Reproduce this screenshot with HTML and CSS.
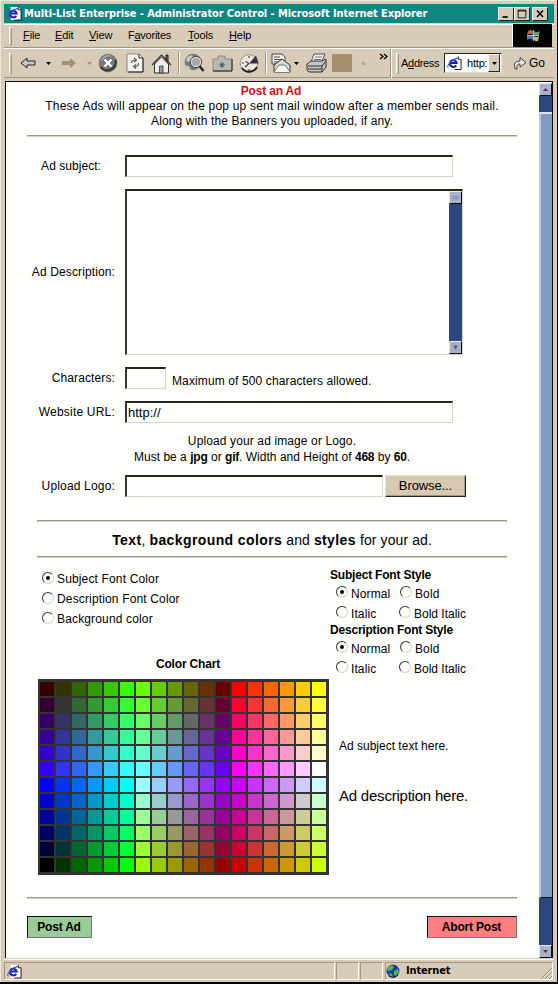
FILE: index.html
```html
<!DOCTYPE html>
<html lang="en">
<head>
<meta charset="utf-8">
<title>Multi-List Enterprise - Administrator Control</title>
<link rel="stylesheet" href="styles.css">
</head>
<body>
<svg width="0" height="0" class="defs">
  <symbol id="ie" viewBox="0 0 16 16">
    <path d="M4 1h8l3 3v11H4z" fill="#fff"/>
    <path d="M12 1v3h3v11H8" fill="none" stroke="#111" stroke-width="1"/>
    <path d="M9.800 10.500A3.600 3.600 0 1 1 10.300 8H4" fill="none" stroke="#1b22a8" stroke-width="2.200"/>
    <path d="M1 13Q0 10 5 6T12 3" fill="none" stroke="#3a52d8" stroke-width="1.200"/>
  </symbol>
</svg>
<div class="window">
  <header class="titlebar">
    <svg class="title-icon"><use href="#ie"/></svg>
    <span class="title">Multi-List Enterprise - Administrator Control - Microsoft Internet Explorer</span>
    <span class="wbtn"><svg viewBox="0 0 16 14"><path d="M4 10.500h6" stroke="#000" stroke-width="2"/></svg></span>
    <span class="wbtn"><svg viewBox="0 0 16 14"><path d="M3.500 2.500h9v9h-9zM3 3.500h10" fill="none" stroke="#000"/></svg></span>
    <span class="wbtn close"><svg viewBox="0 0 16 14"><path d="M4.500 3l7 7.500M11.500 3l-7 7.500" stroke="#000" stroke-width="1.700"/></svg></span>
  </header>
  <nav class="menubar">
    <i class="grip"></i>
    <span class="m-file"><u>F</u>ile</span><span class="m-edit"><u>E</u>dit</span><span class="m-view"><u>V</u>iew</span><span class="m-fav">F<u>a</u>vorites</span><span class="m-tools"><u>T</u>ools</span><span class="m-help"><u>H</u>elp</span>
    <div class="throbber"><svg viewBox="0 0 16 14" width="16" height="14">
      <path d="M3 2q3-2 5 0v4q-2-2-6 0z" fill="#b8604c"/><path d="M9 2q3 2 6 0l-1 4q-3 2-5 0z" fill="#5c9c64"/>
      <path d="M2 7q4-2 6 0v4q-3-2-6 0z" fill="#5078c0"/><path d="M9 7q2 2 5 0l-1 5q-2 1-4-1z" fill="#d0b85c"/>
      <path d="M8.500 1v11M2 6.500h12" stroke="#cdd" stroke-width=".8"/></svg></div>
  </nav>
  <div class="toolbar">
    <i class="grip"></i>
    <svg class="t-back" width="16" height="12" viewBox="0 0 16 12"><path d="M1 6l6-5v3h8v4H7v3z" fill="#c8c4c0" stroke="#222"/></svg>
    <svg class="t-dd1" width="5" height="3"><path d="M0 0h5L2.500 3z"/></svg>
    <svg class="t-fwd" width="16" height="12" viewBox="0 0 16 12"><path d="M15 6L9 1v3H1v4h8v3z" fill="#a3906f"/></svg>
    <svg class="t-dd2" width="5" height="3"><path d="M0 0h5L2.500 3z" fill="#a3906f"/></svg>
    <svg class="t-stop" width="20" height="20" viewBox="0 0 20 20"><circle cx="10" cy="10" r="9.300" fill="#777"/><path d="M2.500 14a8.500 8.500 0 0 0 15-7" fill="none" stroke="#333" stroke-width="2"/><path d="M3 8q3-6 10-5" stroke="#aaa" fill="none" stroke-width="1.500"/><path d="M6.500 6.500l7 7M13.500 6.500l-7 7" stroke="#fff" stroke-width="2.200"/></svg>
    <svg class="t-ref" width="18" height="20" viewBox="0 0 18 20"><path d="M1 1h12l4 4v14H1z" fill="#f5f3ef" stroke="#8d877b"/><path d="M13 1v4h4v14H2" fill="none" stroke="#222"/><path d="M5.500 10q0-3 3.500-3M8 5l2.500 2L8 9M12.500 10q0 3.500-3.500 3.500M10 11.500L7.500 13.500l2.500 2" fill="none" stroke="#555" stroke-width="1.200"/></svg>
    <svg class="t-home" width="21" height="21" viewBox="0 0 21 21"><path d="M15 2h2v8h-2z" fill="#777" stroke="#222"/><path d="M3.500 11v9h14v-9l-7-7z" fill="#eeece8" stroke="#333"/><path d="M1 12l9.500-10L20 12" fill="none" stroke="#333" stroke-width="1.200"/><path d="M8.500 13h3.500v7H8.500z" fill="#999" stroke="#333" stroke-width=".8"/></svg>
    <i class="sep s1"></i>
    <svg class="t-search" width="21" height="20" viewBox="0 0 21 20"><circle cx="9" cy="9" r="8.300" fill="#777"/><path d="M3 4l5-2 1 3-4 4-3-1zM2 12l3 1 2 4-4-2z" fill="#c9c6c0"/><circle cx="12" cy="9" r="4.800" fill="#aaa8a4" stroke="#ddd" stroke-width="1.500"/><circle cx="12" cy="9" r="5.700" fill="none" stroke="#333" stroke-width=".8"/><path d="M15.500 13l4 5" stroke="#222" stroke-width="2.400"/></svg>
    <svg class="t-favs" width="21" height="18" viewBox="0 0 21 18"><path d="M1 5h5V2h7v3h7v12H1z" fill="#bbb8b2" stroke="#888"/><path d="M1 17h19V5" fill="none" stroke="#222"/><path d="M10 8v6M7 11h6M8 9l4 4M12 9l-4 4" stroke="#444" stroke-width=".8"/></svg>
    <svg class="t-hist" width="21" height="20" viewBox="0 0 21 20"><circle cx="10" cy="10.500" r="8.800" fill="#e9e7e2" stroke="#999" stroke-width="1"/><path d="M10 10.500L17 2.500l2.500 8z" fill="#333"/><path d="M3 15a8.800 8.800 0 0 0 15-1" fill="none" stroke="#222" stroke-width="2"/><path d="M10 10.500L6.500 8.500M10 10.500L6 14M10 3v2M3 10h2M10 16v2" stroke="#444" stroke-width="1.200"/></svg>
    <i class="sep s2"></i>
    <svg class="t-mail" width="21" height="20" viewBox="0 0 21 20"><path d="M1 1h10l3 3v7H1z" fill="#eee" stroke="#444"/><path d="M3 4h6M3 6.500h8M3 9h5" stroke="#555"/><path d="M3 12l8-6 8 6v7H3z" fill="#ddd9d4" stroke="#333"/><path d="M3 19l5-7h6l5 7" fill="#f5f5f3" stroke="#777"/></svg>
    <svg class="t-dd3" width="5" height="3"><path d="M0 0h5L2.500 3z"/></svg>
    <svg class="t-print" width="21" height="20" viewBox="0 0 21 20"><path d="M5 9l3-8h11l-4 9z" fill="#f4f2ef" stroke="#555"/><path d="M9 4h7M8 6.500h7" stroke="#777"/><path d="M1 11l4-3h11l4-2v8l-4 5H3l-2-2z" fill="#c8c5bf" stroke="#333"/><path d="M2 13h14l4-5M2 16h14M16 13v6" stroke="#333" fill="none"/></svg>
    <i class="t-edit"></i><i class="t-dot"></i>
    <svg class="t-more" width="9" height="8" viewBox="0 0 9 8"><path d="M1 1l3 2.500L1 6M5 1l3 2.500L5 6" fill="none" stroke="#000" stroke-width="1.300"/></svg>
    <i class="sep s3"></i><i class="grip g2"></i>
    <span class="address">A<u>d</u>dress</span>
    <div class="combo"><svg width="15" height="16"><use href="#ie"/></svg><span>http:</span><b><svg width="5" height="3"><path d="M0 0h5L2.500 3z"/></svg></b></div>
    <svg class="t-go" width="14" height="14" viewBox="0 0 14 14"><path d="M2 13Q-1 5 7 5V1.500l6 5-6 4.500V8Q3 8 4 13z" fill="#e8e4dc" stroke="#333" stroke-width=".9"/></svg>
    <span class="go">Go</span>
  </div>
  <div class="viewport">
    <main class="page">
      <section class="intro">
        <h1>Post an Ad</h1>
        <p class="line1">These Ads will appear on the pop up sent mail window after a member sends mail.</p>
        <p>Along with the Banners you uploaded, if any.</p>
      </section>
      <hr class="wide">
      <form class="form">
        <div class="row r-subject"><label class="short">Ad subject:</label><span class="field f-long"></span></div>
        <div class="row r-desc"><label>Ad Description:</label><div class="field area"><div class="ascroll"><i>=</i><i>▾</i></div></div></div>
        <div class="row r-char"><label>Characters:</label><span class="field f-tiny"></span><span class="hint">Maximum of 500 characters allowed.</span></div>
        <div class="row r-url"><label class="url">Website URL:</label><span class="field f-long">http://</span></div>
        <div class="upload"><p>Upload your ad image or Logo.</p><p class="must">Must be a <b>jpg</b> or <b>gif</b>. Width and Height of <b>468</b> by <b>60</b>.</p></div>
        <div class="row r-logo"><label>Upload Logo:</label><span class="field f-file"></span><span class="browse">Browse...</span></div>
      </form>
      <hr class="inner h1r">
      <h2><b>Text</b>, <b class="bg">background colors</b> and <b>styles</b> for your ad.</h2>
      <hr class="inner h2r">
      <section class="styles">
        <div class="left">
          <div class="opt"><i class="radio on"></i>Subject Font Color</div>
          <div class="opt"><i class="radio"></i>Description Font Color</div>
          <div class="opt"><i class="radio"></i>Background color</div>
          <h3>Color Chart</h3>
          <div class="chart" id="chart"></div>
        </div>
        <div class="right">
          <h3>Subject Font Style</h3>
          <div class="pair"><span><i class="radio on"></i>Normal</span><span><i class="radio"></i>Bold</span></div>
          <div class="pair second"><span><i class="radio"></i>Italic</span><span class="bi"><i class="radio"></i>Bold Italic</span></div>
          <h3>Description Font Style</h3>
          <div class="pair"><span><i class="radio on"></i>Normal</span><span><i class="radio"></i>Bold</span></div>
          <div class="pair second"><span><i class="radio"></i>Italic</span><span class="bi"><i class="radio"></i>Bold Italic</span></div>
          <p class="sample1">Ad subject text here.</p>
          <p class="sample2">Ad description here.</p>
        </div>
      </section>
      <hr class="wide last">
      <div class="actions"><span class="btn post">Post Ad</span><span class="btn abort">Abort Post</span></div>
    </main>
    <aside class="scroll">
      <i class="sb"><svg width="5" height="3"><path d="M2.500 0L5 3H0z" fill="#633"/></svg></i>
      <i class="thumb"></i>
      <i class="sb"><svg width="5" height="3"><path d="M0 0h5L2.500 3z" fill="#633"/></svg></i>
    </aside>
  </div>
  <footer class="status">
    <div class="pane p1"><svg width="15" height="15"><use href="#ie"/></svg></div><div class="pane p2"></div><div class="pane p2"></div>
    <div class="pane p3"><svg width="14" height="14" viewBox="0 0 14 14"><circle cx="7" cy="7" r="6.500" fill="#1c3ca0"/><path d="M2 3l4-2 2 2-2 3-3 1-2-1zM8 7l4-2 1 3-3 4-2-1zM3 9l3 1 1 3-3-1z" fill="#4fb648"/><path d="M3 12q5 3 9-1" stroke="#112" fill="none"/></svg>Internet
    <svg class="resize" width="12" height="12"><path d="M1 12L12 1M5 12l7-7M9 12l3-3" stroke="#8d8474"/><path d="M2 12L12 2M6 12l6-6M10 12l2-2" stroke="#fff" stroke-width=".6"/></svg></div>
  </footer>
</div>
<script src="chart.js"></script>
</body>
</html>
```
FILE: styles.css
```css
* { box-sizing: border-box; }
body { margin: 0; background: #d8ccb9; font: 12px/15px "Liberation Sans", Arial, sans-serif; color: #000; letter-spacing: .12px; }
p, h1, h2, h3 { margin: 0; font-size: 12px; font-weight: normal; }
i { display: block; font-style: normal; flex: none; }
svg { display: block; flex: none; }
.defs { position: absolute; }
.window { width: 558px; height: 984px; display: flex; flex-direction: column; background: #d8ccb9; border-right: 1px solid #000; border-bottom: 2px solid #000; box-shadow: inset 1px 1px #efe8dc; padding: 4px 3px 0 4px; }
.titlebar { height: 19px; background: #0d8780; display: flex; align-items: center; color: #fff; font: bold 11px/18px "DejaVu Sans Condensed", sans-serif; letter-spacing: -.09px; padding: 0 2px 0 3px; flex: none; }
.title-icon { width: 15px; height: 15px; }
.title { width: 476px; padding-left: 2px; white-space: nowrap; }
.wbtn { width: 16px; height: 14px; background: #d8ccb9; border: 1px solid; border-color: #fff #222 #222 #fff; flex: none; }
.wbtn.close { margin-left: 2px; }
.wbtn svg { width: 14px; height: 12px; }
.menubar { height: 24px; margin-top: 1px; flex: none; display: flex; align-items: center; font: 11px/14px "Liberation Sans", sans-serif; letter-spacing: -.1px; border-bottom: 1px solid #a3967f; border-top: 1px solid #fff; padding-bottom: 1px; }
.menubar span { white-space: nowrap; flex: none; margin-top: -1px; }
.grip { width: 3px; height: 18px; border: 1px solid; border-color: #fff #a3967f #a3967f #fff; margin-left: 5px; }
.m-file { width: 32px; margin-left: 11px; }
.m-edit { width: 34px; }
.m-view { width: 39px; }
.m-fav { width: 60px; letter-spacing: -.25px; }
.m-tools { width: 41px; }
.m-help { width: 283px; }
.throbber { width: 40px; height: 23px; background: #000; border-left: 1px solid #fff; display: flex; align-items: center; justify-content: center; }
.toolbar { height: 30px; flex: none; display: flex; align-items: center; border-top: 1px solid #fff; border-bottom: 1px solid #a3967f; font-size: 11px; letter-spacing: -.2px; }
.toolbar .grip { height: 21px; }
.t-back { margin-left: 8px; } .t-dd1 { margin-left: 10px; } .t-fwd { margin-left: 10px; } .t-dd2 { margin-left: 10px; }
.t-stop { margin-left: 6px; } .t-ref { margin-left: 8px; } .t-home { margin-left: 7px; }
.sep { width: 2px; height: 22px; background: linear-gradient(90deg, #a3967f 50%, #fff 50%); }
.s1 { margin-left: 6px; } .t-search { margin-left: 4px; } .t-favs { margin-left: 7px; } .t-hist { margin-left: 6px; }
.s2 { margin-left: 5px; } .t-mail { margin-left: 4px; } .t-dd3 { margin-left: 2px; } .t-print { margin-left: 7px; }
.t-edit { width: 20px; height: 18px; margin-left: 5px; background: #a8906c; }
.t-dot { width: 3px; height: 3px; margin-left: 10px; background: #b7a78c; }
.t-more { margin: -12px 0 0 14px; }
.s3 { margin-left: 2px; height: 29px; }
.toolbar .g2 { margin-left: 4px; }
.address { width: 43px; margin-left: 2px; letter-spacing: -.3px; }
.combo { width: 58px; height: 20px; background: #fff; border: 1px solid; border-color: #222 #ddd #ddd #222; display: flex; align-items: center; padding-left: 2px; letter-spacing: -.2px; }
.combo span { width: 26px; padding-left: 5px; }
.combo b { width: 12px; height: 18px; background: #d8ccb9; border: 1px solid; border-color: #fff #222 #222 #fff; display: flex; align-items: center; justify-content: center; }
.t-go { margin-left: 11px; } .go { margin-left: 2px; font-size: 12px; }
.viewport { height: 877px; flex: none; margin: 3px 0 0 1px; width: 548px; display: flex; border: 1px solid; border-width: 1px 1px 0; border-color: #111; background: #fffffd; }
.page { width: 533px; flex: none; padding: 2px 22px 0 21px; }
.intro { text-align: center; height: 51px; white-space: nowrap; }
.intro h1 { font-weight: bold; color: #d01018; letter-spacing: -.17px; padding-right: 2px; }
.line1 { letter-spacing: .2px; }
hr { margin: 0; border: 0; height: 2px; background: linear-gradient(#9c9585 50%, #d9d3c4 50%); }
.inner { width: 470px; margin-left: 10px; }
.row { display: flex; }
.row label { width: 88px; margin-right: 10px; text-align: right; white-space: nowrap; flex: none; }
.row label.short { padding-right: 14px; letter-spacing: .05px; }
.row label.url { letter-spacing: .2px; }
.field { border: 1px solid; border-width: 2px 1px 1px 2px; border-color: #24231c #d6d3cc #d6d3cc #36342c; background: #fffffd; height: 22px; flex: none; font-size: 13px; line-height: 20px; letter-spacing: 0; padding-left: 1px; }
.r-subject { margin-top: 18px; align-items: center; }
.f-long { width: 328px; } .f-tiny { width: 41px; } .f-file { width: 258px; }
.r-desc { margin-top: 12px; align-items: center; }
.area { width: 338px; height: 166px; display: flex; justify-content: flex-end; }
.ascroll { width: 13px; height: 163px; background: #2b4683; display: flex; flex-direction: column; justify-content: space-between; }
.ascroll i, .sb { width: 13px; height: 13px; background: #a9b0cb; border: 1px solid; border-color: #e6e8ee #111 #111 #e6e8ee; font: 9px/10px "DejaVu Sans", sans-serif; color: #57618c; text-align: center; letter-spacing: 0; }
.r-char { margin-top: 12px; align-items: center; }
.r-char .hint { padding: 6px 0 0 6px; }
.r-url { margin-top: 12px; align-items: center; }
.upload { margin-top: 11px; text-align: center; }
.upload p + p { margin-top: 1px; }
.must { letter-spacing: .02px; }
.must b { letter-spacing: -.2px; }
.r-logo { margin-top: 10px; align-items: center; }
.r-logo label { letter-spacing: .17px; }
.browse { width: 81px; height: 22px; margin-left: 2px; background: #d8c9b3; border: 1px solid; border-color: #e9e1d4 #222 #222 #e9e1d4; box-shadow: inset -1px -1px #a3967f; text-align: center; font-size: 13px; line-height: 20px; letter-spacing: -.1px; }
.h1r { margin-top: 23px; }
h2 { font-size: 14px; line-height: 18px; text-align: center; margin: 9px 0 7px; height: 18px; letter-spacing: .09px; }
h2 b { letter-spacing: .4px; }
.styles { display: flex; height: 339px; }
.left { width: 303px; flex: none; padding-left: 15px; padding-top: 11px; }
.opt { height: 20px; display: flex; align-items: flex-start; line-height: 20px; letter-spacing: .15px; }
.radio { width: 12px; height: 12px; border-radius: 50%; border: 1.5px solid; border-color: #333 #d5d2ca #d5d2ca #333; background: #fffffd; display: flex; align-items: center; justify-content: center; margin-top: 3px; margin-right: 3px; }
.radio.on::after { content: ""; width: 4px; height: 4px; border-radius: 50%; background: #000; }
.left h3 { font-weight: bold; width: 292px; text-align: center; margin: 28px 0 7px; letter-spacing: -.18px; line-height: 15px; height: 15px; }
.chart { width: 291px; margin-left: -4px; padding: 3px 3px 3px 2px; background: #333; display: grid; grid-template-columns: repeat(18, 14px); grid-auto-rows: 14px; gap: 2px; height: 196px; }
.right { padding-top: 10px; }
.right h3 { font-weight: bold; letter-spacing: -.2px; line-height: 15px; height: 15px; }
.pair { display: grid; grid-template-columns: 64px 80px; padding-left: 6px; height: 20px; line-height: 20px; letter-spacing: .1px; margin-top: 1px; }
.pair span { display: flex; white-space: nowrap; }
.pair .radio { margin-top: 2px; }
.pair .bi { margin-left: -1px; letter-spacing: 0; }
.pair.second { margin-top: 0; height: 19px; }
.sample1 { margin: 61px 0 0 9px; letter-spacing: 0; }
.sample2 { margin: 32px 0 0 9px; font-size: 15px; line-height: 20px; letter-spacing: -.22px; }
.actions { display: flex; justify-content: space-between; margin-top: 17px; }
.btn { height: 22px; border: 1px solid; border-color: #111 #777 #777 #111; font-weight: bold; text-align: center; line-height: 20px; letter-spacing: -.2px; padding-right: 1px; }
.post { width: 65px; background: #99cc99; }
.abort { width: 90px; background: #ff8080; }
.scroll { width: 13px; height: 875px; background: #2b4683; display: flex; flex-direction: column; margin-top: 1px; }
.sb { display: flex; align-items: center; justify-content: center; }
.thumb { height: 786px; margin: 16px 0 47px; background: #819ac8; border: 1px solid; border-width: 2px 0 1px 2px; border-color: #dfe4ee #111 #111 #b9c6df; }
.status { height: 22px; flex: none; display: flex; padding-top: 2px; margin-top: 1px; border-top: 1px solid #fff; font: bold 11px/18px "DejaVu Sans Condensed", sans-serif; letter-spacing: -.15px; }
.pane { border: 1px solid; border-color: #a3967f #fff #fff #a3967f; height: 18px; flex: none; display: flex; align-items: center; }
.p1 { width: 331px; padding-left: 2px; } .p2 { width: 23px; margin-left: 1px; }
.p3 { width: 168px; margin-left: 2px; padding-left: 0; gap: 6px; white-space: nowrap; }
.resize { margin-left: auto; align-self: flex-end; }
```
FILE: chart.js
```js
// Web-safe palette, 18 columns by 12 rows: each column fixes red and green,
// the blue channel rises through the first six rows and falls through the rest.
const top6 = ['33 00', '33 33', '33 66', '33 99', '33 CC', '33 FF', '66 FF', '66 CC', '66 99', '66 66', '66 33', '66 00', 'FF 00', 'FF 33', 'FF 66', 'FF 99', 'FF CC', 'FF FF'];
const low6 = ['00 00', '00 33', '00 66', '00 99', '00 CC', '00 FF', '99 FF', '99 CC', '99 99', '99 66', '99 33', '99 00', 'CC 00', 'CC 33', 'CC 66', 'CC 99', 'CC CC', 'CC FF'];
const steps = ['00', '33', '66', '99', 'CC', 'FF'];
const chart = document.getElementById('chart');
for (let row = 0; row < 12; row++) {
  const blue = row < 6 ? steps[row] : steps[11 - row];
  for (const rg of row < 6 ? top6 : low6) {
    const cell = document.createElement('div');
    cell.style.background = '#' + rg.replace(' ', '') + blue;
    chart.appendChild(cell);
  }
}
```
